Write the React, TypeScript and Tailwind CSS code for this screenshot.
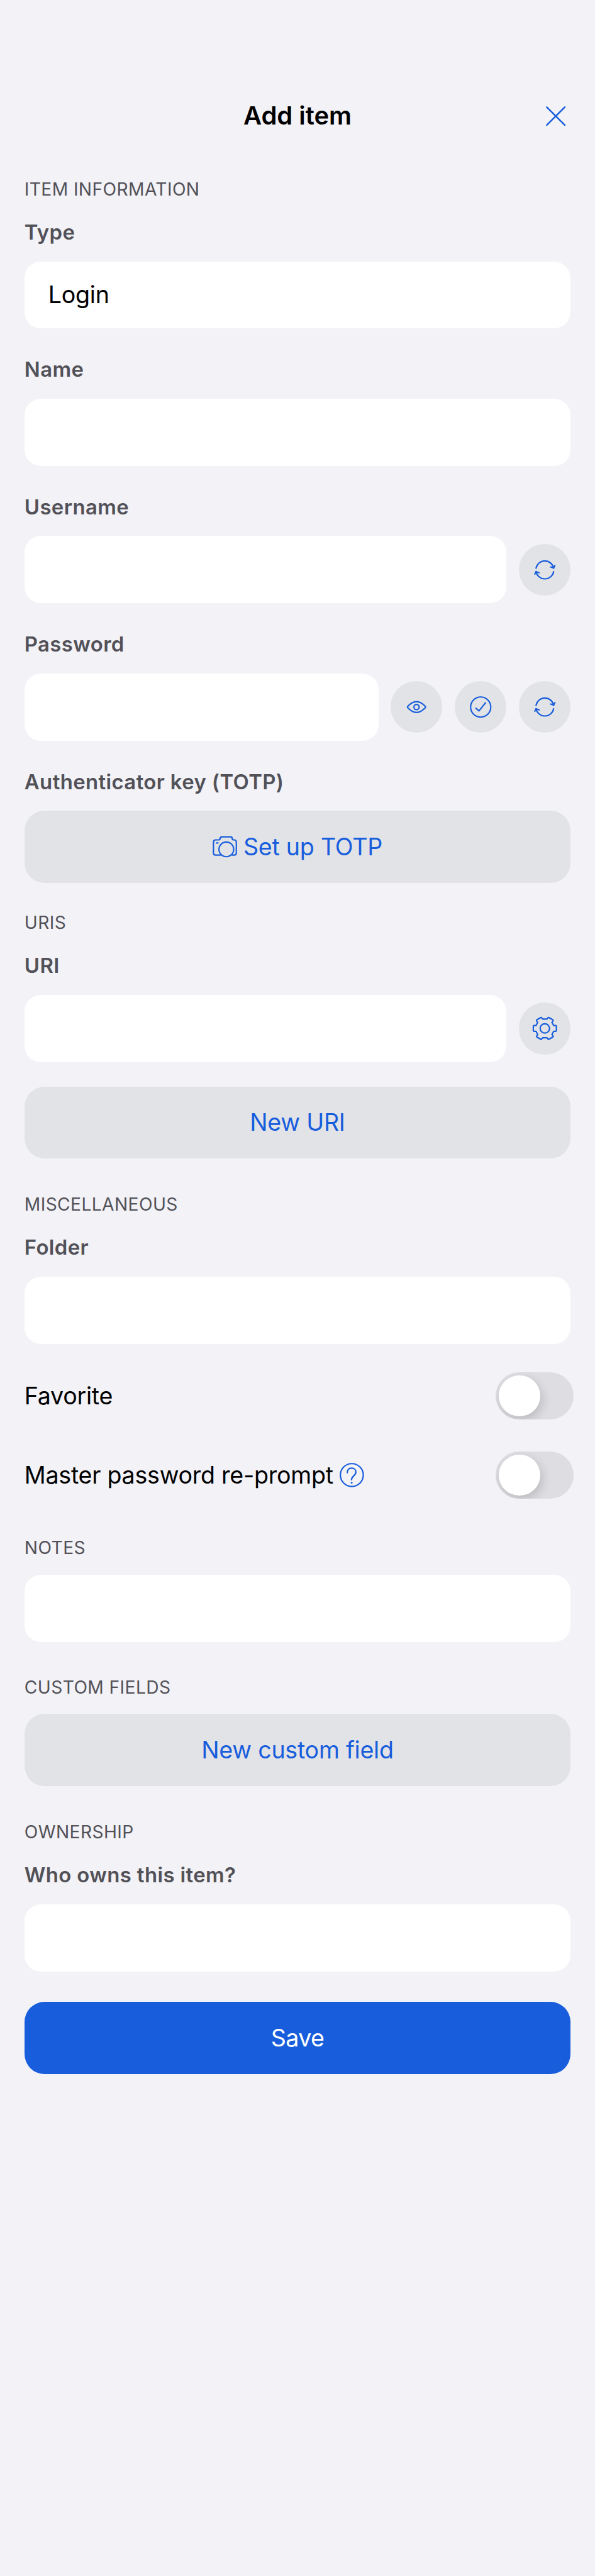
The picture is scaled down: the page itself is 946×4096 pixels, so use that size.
import type { ReactNode } from "react";
import { clsx } from "clsx";

function Section({ children, className }: { children: ReactNode; className?: string }) {
  return (
    <h2
      className={clsx(
        "flex items-center text-[28.2px] leading-none tracking-[0.4px] uppercase text-[#525158]",
        className,
      )}
    >
      {children}
    </h2>
  );
}

function Label({ children }: { children: ReactNode }) {
  return (
    <span className="flex h-[92.4px] items-center text-[32.9px] leading-none font-semibold tracking-[0.38px] text-[#525158]">
      {children}
    </span>
  );
}

function Box({ children }: { children?: ReactNode }) {
  return (
    <div className="flex h-[106.8px] min-w-0 flex-1 items-center rounded-[26px] bg-white pl-[38px] text-[37.6px] leading-none tracking-[-0.25px] text-black">
      {children}
    </div>
  );
}

function Field({
  label,
  value,
  actions,
  className,
}: {
  label: string;
  value?: string;
  actions?: ReactNode;
  className?: string;
}) {
  return (
    <div className={className}>
      <Label>{label}</Label>
      <div className="flex items-center gap-[19.4px]">
        <Box>{value}</Box>
        {actions}
      </div>
    </div>
  );
}

function Button({
  children,
  primary,
  className,
}: {
  children: ReactNode;
  primary?: boolean;
  className?: string;
}) {
  return (
    <button
      className={clsx(
        "flex h-[114.9px] w-full items-center justify-center rounded-[32px] text-[37.6px] leading-none",
        primary
          ? "bg-[#175ddc] tracking-[-0.6px] text-white"
          : "bg-[#e2e3e7] tracking-[-0.25px] text-[#175ddc]",
        className,
      )}
    >
      {children}
    </button>
  );
}

function RoundButton({ children, label }: { children: ReactNode; label: string }) {
  return (
    <button
      aria-label={label}
      className="size-[82.5px] shrink-0 rounded-full bg-[#e2e3e7] text-[#175ddc]"
    >
      <svg
        viewBox="0 0 306 306"
        className="size-full"
        fill="none"
        stroke="currentColor"
        strokeWidth="8"
        strokeLinecap="round"
        strokeLinejoin="round"
      >
        {children}
      </svg>
    </button>
  );
}

function Refresh() {
  return (
    <RoundButton label="Generate">
      <path d="M101 143A53 53 0 0 1 205 142" />
      <path d="M187 135L205 142L212 127" />
      <path d="M205 163A53 53 0 0 1 101 163" />
      <path d="M94 178L101 163L119 170" />
    </RoundButton>
  );
}

function Toggle() {
  return (
    <button
      role="switch"
      aria-checked="false"
      className="-mr-[4.9px] flex h-[75.2px] w-[123.7px] shrink-0 items-center overflow-hidden rounded-full bg-[#dedde2] pl-[4.9px]"
    >
      <span className="size-[65.4px] rounded-full bg-white shadow-[3px_6px_16px_rgba(0,0,0,0.16)]" />
    </button>
  );
}

export default function App() {
  return (
    <div className="min-h-[4096px] w-[946px] bg-[#f2f2f7] px-[38.8px] pt-[144.4px] font-['Inter',sans-serif]">
      <header className="grid h-[80px] grid-cols-[1fr_auto_1fr] items-center">
        <span />
        <h1 className="text-[40px] leading-none font-semibold tracking-[-0.05px] text-black">
          Add item
        </h1>
        <button aria-label="Close" className="mr-[7.5px] justify-self-end text-[#175ddc]">
          <svg
            viewBox="0 0 116 116"
            className="size-[31.3px]"
            fill="none"
            stroke="currentColor"
            strokeWidth="9"
            strokeLinecap="round"
          >
            <path d="M5 5L111 111M111 5L5 111" />
          </svg>
        </button>
      </header>

      <Section className="mt-[53.7px] h-[45.2px]">Item information</Section>
      <Field label="Type" value="Login" />
      <Field label="Name" className="mt-[19.2px]" />
      <Field label="Username" className="mt-[19.2px]" actions={<Refresh />} />
      <Field
        label="Password"
        className="mt-[19.2px]"
        actions={
          <>
            <RoundButton label="Show password">
              <path d="M101 149C116 133 133 121 153 121S190 133 205 149Q208 153 205 157C190 173 173 185 153 185S116 173 101 157Q98 153 101 149Z" />
              <circle cx="153" cy="153" r="15.5" />
            </RoundButton>
            <RoundButton label="Check password">
              <circle cx="153" cy="153" r="59.5" />
              <path d="M125 160L143 176L181 128" />
            </RoundButton>
            <Refresh />
          </>
        }
      />
      <div className="mt-[19.2px]">
        <Label>Authenticator key (TOTP)</Label>
        <Button className="gap-[9.5px]">
          <svg
            viewBox="0 0 146 130"
            className="h-[35px] w-[39.4px]"
            fill="none"
            stroke="currentColor"
            strokeWidth="8"
            strokeLinecap="round"
            strokeLinejoin="round"
          >
            <path d="M46 114H18Q5 114 5 101V37Q5 24 18 24H37Q44 24 44 17Q44 6 56 6H105Q116 6 116 17Q116 24 123 24H127Q140 24 140 37V101Q140 114 127 114H116" />
            <circle cx="81" cy="80" r="43.5" />
            <path d="M22 42H32" />
          </svg>
          Set up TOTP
        </Button>
      </div>

      <Section className="mt-[40.3px] h-[45.2px]">URIs</Section>
      <Field
        label="URI"
        actions={
          <RoundButton label="Options">
            <path d="M85 140Q85 136 89 136H101L111 117L105 109Q102 105 106 102L129 89Q133 87 135 91L140 98H166L171 91Q173 87 177 89L200 102Q204 105 201 109L195 117L205 136H217Q221 136 221 140V166Q221 170 217 170H205L195 189L201 197Q204 201 200 204L177 217Q173 219 171 215L166 208H140L135 215Q133 219 129 217L106 204Q102 201 105 197L111 189L101 170H89Q85 170 85 166Z" />
            <circle cx="153" cy="153" r="27.5" />
          </RoundButton>
        }
      />
      <Button className="mt-[38.8px]">New URI</Button>

      <Section className="mt-[50px] h-[45.2px]">Miscellaneous</Section>
      <Field label="Folder" />
      <div className="mt-[45.3px] flex flex-col gap-[50.9px] text-[37.6px] leading-none tracking-[-0.25px] text-black">
        <div className="flex items-center justify-between">
          <span>Favorite</span>
          <Toggle />
        </div>
        <div className="flex items-center justify-between">
          <div className="flex items-center gap-[10px]">
            <span>Master password re-prompt</span>
            <svg
              viewBox="0 0 144 144"
              className="size-[38.8px] text-[#175ddc]"
              fill="none"
              stroke="currentColor"
              strokeWidth="8"
              strokeLinecap="round"
            >
              <circle cx="72" cy="72" r="67.5" />
              <path d="M45 58C45 41 55 31 70 31C86 31 96 41 96 55C96 77 70 76 70 100" />
              <circle cx="71" cy="118" r="5.5" fill="currentColor" stroke="none" />
            </svg>
          </div>
          <Toggle />
        </div>
      </div>

      <Section className="mt-[35.3px] h-[85.2px]">Notes</Section>
      <div className="flex">
        <Box />
      </div>

      <Section className="mt-[29.6px] h-[85.2px]">Custom fields</Section>
      <Button>New custom field</Button>

      <Section className="mt-[50px] h-[45.2px]">Ownership</Section>
      <Field label="Who owns this item?" />
      <Button primary className="mt-[48.6px]">
        Save
      </Button>
    </div>
  );
}
